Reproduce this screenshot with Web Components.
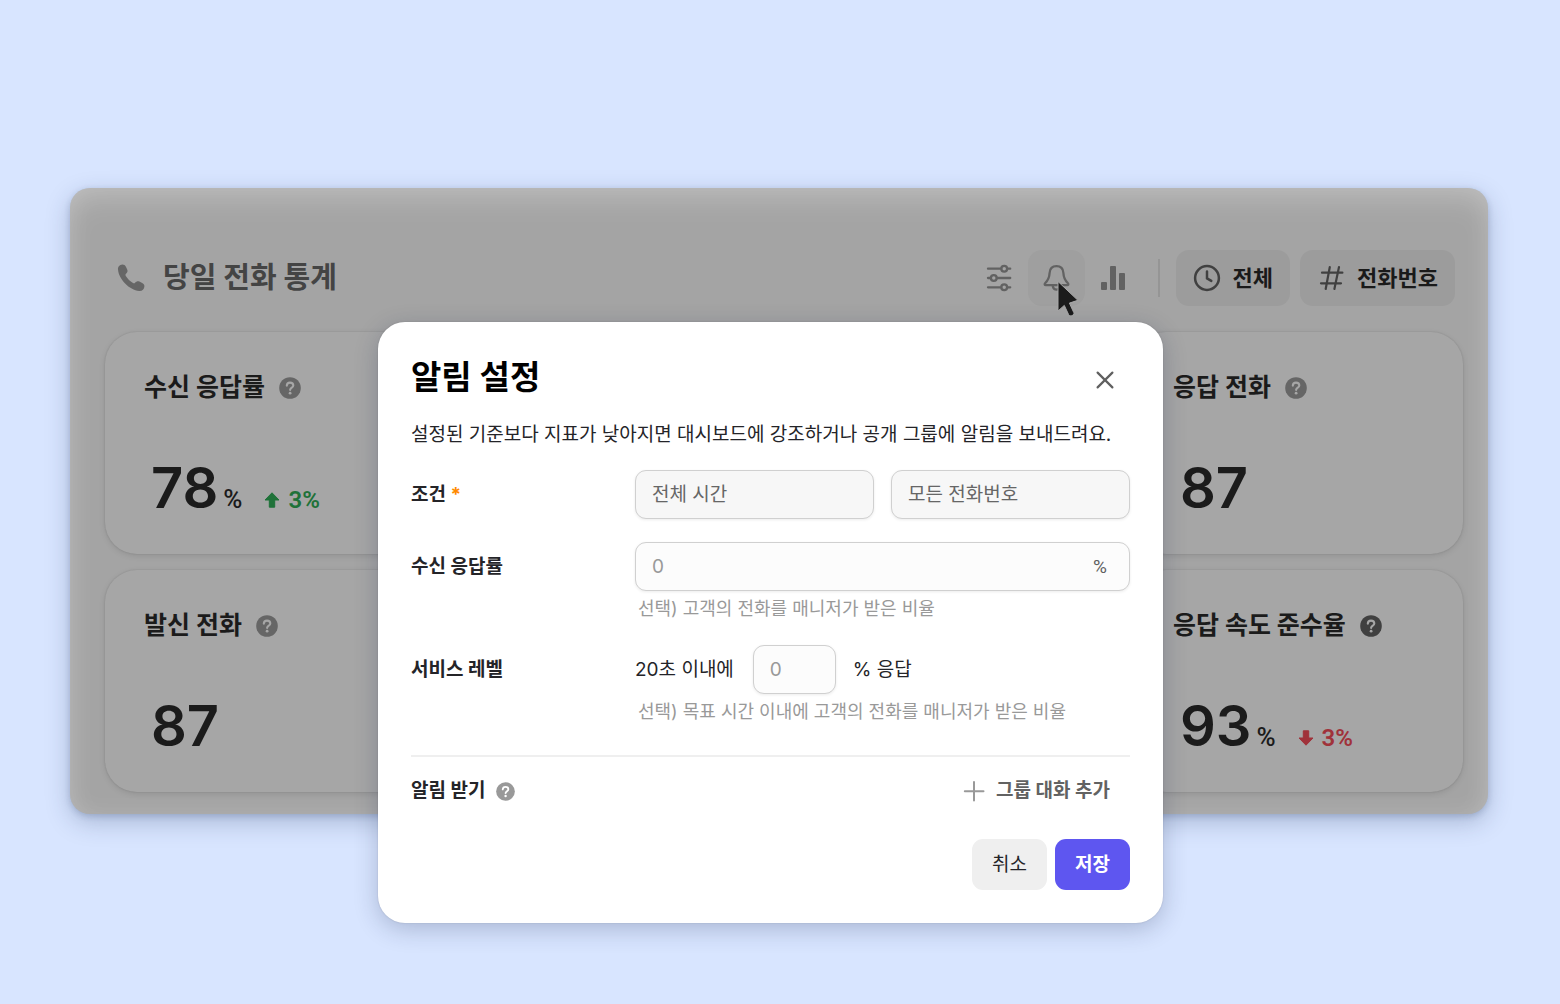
<!DOCTYPE html>
<html lang="ko">
<head>
<meta charset="utf-8">
<meta name="viewport" content="width=device-width, initial-scale=1">
<title>알림 설정</title>
<style>
  body {
    margin: 0;
    min-height: 100vh;
    background: #d8e5ff;
    color: #242428;
    font-family: Inter, "Noto Sans CJK KR", sans-serif;
    font-size: 19px;
    line-height: 28px;
  }
</style>
</head>
<body>
<call-dashboard></call-dashboard>
<script>
const define = (name, html) => {
  const template = document.createElement('template');
  template.innerHTML = html;
  customElements.define(name, class extends HTMLElement {
    constructor() {
      super();
      this.attachShadow({ mode: 'open' }).append(template.content.cloneNode(true));
    }
  });
};

const ICONS = {
  phone: [28, 28, '<path fill="currentColor" d="M1 5.600C.8 2.900 2.600.7 5.400.6c1.700 0 2.700.7 3.500 2.200l1.300 2.700c.7 1.600.3 3-1.200 4.300-.7.7-.7 1.300-.2 2.100 1.900 3 4.100 5.200 7.200 7.100.8.5 1.500.5 2.100-.2 1.400-1.600 2.700-1.900 4.300-1.200l2.800 1.400c1.600.8 2.300 1.800 2.200 3.500-.1 2.800-2.300 4.700-5.200 4.500C12.500 26.300 1.700 15.300 1 5.600z"/>'],
  sliders: [28, 28, '<g fill="none" stroke="currentColor" stroke-width="2.3" stroke-linecap="round"><path d="M3 4.700h13.200M22.200 4.700h3M3 14h2.700M11.800 14h13.400M3 23.300h13.200M22.200 23.300h3"/><circle cx="19.200" cy="4.700" r="2.900"/><circle cx="8.800" cy="14" r="2.900"/><circle cx="19.200" cy="23.300" r="2.900"/></g>'],
  bell: [28, 28, '<g fill="none" stroke="currentColor" stroke-width="2.300" stroke-linejoin="round" stroke-linecap="round"><path d="M14.500 2.200c-4.200 0-6.700 2.800-6.900 6.800-.2 4.600-1.200 7-4.500 10.300-.8.900-.5 1.800.7 1.800h21.400c1.200 0 1.500-.9.700-1.800-3.300-3.300-4.300-5.700-4.500-10.300-.2-4-2.700-6.800-6.900-6.800z"/><path d="M10.800 22.200c.5 2.200 1.900 3.500 3.700 3.500s3.200-1.300 3.700-3.500"/></g>'],
  bars: [28, 28, '<g fill="currentColor"><rect x="2" y="18" width="6" height="8" rx="1"/><rect x="11" y="2" width="6" height="24" rx="1"/><rect x="20" y="9" width="6" height="17" rx="1"/></g>'],
  clock: [28, 28, '<g fill="none" stroke="currentColor" stroke-width="2.500" stroke-linecap="round" stroke-linejoin="round"><circle cx="14" cy="14" r="11.900"/><path d="M14 7.400v7l4.300 2.500"/></g>'],
  hash: [28, 28, '<path fill="none" stroke="currentColor" stroke-width="2.200" stroke-linecap="round" d="M12.800 3 8.700 25M22 3l-4.600 22M5 8.700h20.400M4 19.300H24"/>'],
  help: [22, 22, '<circle cx="11" cy="11" r="10.800" fill="currentColor"/><path d="M7.800 8.600C7.900 6.700 9.200 5.600 11 5.600c1.900 0 3.300 1.100 3.300 2.800 0 2.200-3 2.300-3.200 4.500" fill="none" stroke="var(--mark, #a6a6a6)" stroke-width="2.100" stroke-linecap="round"/><circle cx="11.100" cy="16.200" r="1.400" fill="var(--mark, #a6a6a6)"/>'],
  up: [16, 16, '<path fill="currentColor" stroke="currentColor" stroke-width="1" stroke-linejoin="round" d="M8 .8l7 7.200h-4.300v7.200H5.300V8H1z"/>'],
  down: [16, 16, '<path fill="currentColor" stroke="currentColor" stroke-width="1" stroke-linejoin="round" d="M8 15.200l7-7.200h-4.300V.8H5.300V8H1z"/>'],
  close: [18, 18, '<path fill="none" stroke="currentColor" stroke-width="2.200" stroke-linecap="round" d="M1.600 1.600l14.800 14.800M16.400 1.600 1.600 16.400"/>'],
  plus: [20, 20, '<path fill="none" stroke="currentColor" stroke-width="2" stroke-linecap="round" d="M10 1v18.500M.8 10.300h18.700"/>'],
  cursor: [22, 36, '<path fill="#1b1b1b" stroke="#a9a9a9" stroke-width="1" d="M1 .5v29.500l6.300-5.600 4.300 9.200c1.200 2.500 6.400.8 5.200-2l-4.400-9.500 8.500-2.800z"/>']
};

customElements.define('ui-icon', class extends HTMLElement {
  connectedCallback() {
    if (this.shadowRoot) return;
    const [w, h, art] = ICONS[this.getAttribute('name')];
    const size = Number(this.getAttribute('size')) || w;
    this.attachShadow({ mode: 'open' }).innerHTML = `
      <style>:host { display: inline-flex; flex: none; } svg { display: block; overflow: visible; }</style>
      <svg width="${size}" height="${size * h / w}" viewBox="0 0 ${w} ${h}" aria-hidden="true">${art}</svg>`;
  }
});

define('tool-button', `
  <style>
    :host { display: block; position: relative; color: #626262; }
    button { display: flex; align-items: center; justify-content: center; width: 57px; height: 56px; padding: 0; border: 0; border-radius: 14px; background: none; color: inherit; }
    :host([active]) button { background: #9f9f9f; }
    ::slotted([slot=pointer]) { position: absolute; left: 29px; top: 31px; z-index: 1; }
  </style>
  <button type="button"><slot></slot></button>
  <slot name="pointer"></slot>`);

define('filter-button', `
  <style>
    :host { display: block; }
    button { display: flex; align-items: center; gap: 12px; height: 56px; padding: 0 17px; border: 0; border-radius: 13px; background: #9c9c9c; color: #1a1a1a; font: 700 22px/32px Inter, "Noto Sans CJK KR", sans-serif; white-space: nowrap; }
    ::slotted(ui-icon) { color: #404040; }
  </style>
  <button type="button"><slot name="icon"></slot><span><slot></slot></span></button>`);

define('stat-card', `
  <style>
    :host { display: flex; flex-direction: column; justify-content: space-between; height: 222px; padding: 36px 39px; box-sizing: border-box; border-radius: 32px; background: #a6a6a6; color: #1b1b1b; box-shadow: 0 0 2px rgba(0,0,0,.14), 0 2px 6px rgba(0,0,0,.1); }
    header { display: flex; align-items: center; gap: 14px; }
    h3 { margin: 0; font-size: 25px; line-height: 38px; font-weight: 700; white-space: nowrap; }
    header ui-icon { color: var(--help, #666); margin-top: 2px; }
    div { display: flex; align-items: baseline; padding-left: 7px; line-height: 24px; }
    .value { font-size: 56px; line-height: 60px; font-weight: 600; }
    ::slotted([slot=unit]) { margin-left: 5px; font: 500 26px/24px Roboto, sans-serif; }
    ::slotted([slot=trend]) { margin-left: 22px; }
  </style>
  <header><h3><slot name="title"></slot></h3><ui-icon name="help"></ui-icon></header>
  <div><span class="value"><slot></slot></span><slot name="unit"></slot><slot name="trend"></slot></div>`);

define('trend-badge', `
  <style>
    :host { display: inline-flex; align-items: baseline; gap: 8px; font: 600 24px/24px Roboto, sans-serif; color: #1f7239; }
    :host([down]) { color: #a0323a; }
  </style>
  <slot></slot>`);

define('stats-panel', `
  <style>
    :host { display: block; padding: 62px 25px 22px 35px; border-radius: 20px; background: #a4a4a4;
      box-shadow: inset 0 14px 30px -4px rgba(255,255,255,.22), inset 0 0 24px rgba(255,255,255,.12), 0 2px 6px rgba(30,50,90,.18), 0 8px 24px rgba(30,50,90,.26); }
    .bar { display: flex; align-items: center; justify-content: space-between; padding: 0 8px 0 12px; margin-bottom: 26px; }
    .title { display: flex; align-items: center; gap: 18px; color: #666; }
    h1 { margin: 0; font-size: 29px; line-height: 42px; font-weight: 700; color: #444; white-space: nowrap; }
    nav { display: flex; align-items: center; }
    hr { width: 2px; height: 38px; margin: 0 16px; border: 0; background: #959595; }
    filter-button + filter-button { margin-left: 10px; }
    .grid { display: grid; grid-template-columns: repeat(4, 1fr); gap: 16px 14px; }
    .last { grid-column: 4; }
    .dark { --help: #404040; }
  </style>
  <div class="bar">
    <div class="title"><ui-icon name="phone"></ui-icon><h1>당일 전화 통계</h1></div>
    <nav>
      <tool-button><ui-icon name="sliders"></ui-icon></tool-button>
      <tool-button active><ui-icon name="bell"></ui-icon><ui-icon slot="pointer" name="cursor"></ui-icon></tool-button>
      <tool-button><ui-icon name="bars"></ui-icon></tool-button>
      <hr>
      <filter-button><ui-icon slot="icon" name="clock"></ui-icon>전체</filter-button>
      <filter-button><ui-icon slot="icon" name="hash"></ui-icon>전화번호</filter-button>
    </nav>
  </div>
  <div class="grid">
    <stat-card><span slot="title">수신 응답률</span>78<span slot="unit">%</span><trend-badge slot="trend"><ui-icon name="up"></ui-icon>3%</trend-badge></stat-card>
    <stat-card class="last"><span slot="title">응답 전화</span>87</stat-card>
    <stat-card><span slot="title">발신 전화</span>87</stat-card>
    <stat-card class="last dark"><span slot="title">응답 속도 준수율</span>93<span slot="unit">%</span><trend-badge slot="trend" down><ui-icon name="down"></ui-icon>3%</trend-badge></stat-card>
  </div>`);

define('form-row', `
  <style>
    :host { display: grid; grid-template-columns: 224px 1fr; }
    .label { display: flex; align-items: center; height: 49px; font-weight: 700; }
    .field { display: flex; align-items: center; gap: 17px; height: 49px; }
  </style>
  <div class="label"><slot name="label"></slot></div>
  <div>
    <div class="field"><slot></slot></div>
    <slot name="hint"></slot>
  </div>`);

define('alert-dialog', `
  <style>
    :host { display: block; box-sizing: border-box; width: 785px; padding: 33px; border-radius: 27px; background: #fff;
      box-shadow: 0 0 2px rgba(0,0,0,.14), 0 6px 24px rgba(20,35,70,.24); }
    header { display: flex; align-items: center; justify-content: space-between; height: 44px; }
    h2 { margin: 0; font-size: 33px; line-height: 44px; font-weight: 700; color: #000; }
    button { font: inherit; border: 0; padding: 0; background: none; color: inherit; cursor: pointer; }
    .close { display: flex; align-items: center; justify-content: center; align-self: flex-start; flex: none; width: 50px; height: 50px; color: #606060; }
    .intro { margin: 22px 0 21px; white-space: nowrap; }
    .hint { margin: 5px 3px 0; font-size: 18px; line-height: 26px; color: #999; }
    form-row { margin-bottom: 23px; }
    .required { color: #ff8a00; }
    input, select { appearance: none; box-sizing: border-box; min-width: 0; height: 49px; padding: 0 16px; border: 1px solid #d0d0d0; border-radius: 11px; background: #fcfcfc; box-shadow: 0 1px 3px rgba(0,0,0,.08); font: inherit; color: #242428; outline: 0; }
    input::placeholder { color: #999; opacity: 1; }
    select { flex: 1; background: #f7f7f7; color: #666; opacity: 1; }
    .rate { display: grid; flex: 1; align-items: center; }
    .rate > * { grid-area: 1 / 1; }
    .rate span { justify-self: end; margin-right: 23px; font-family: Roboto, sans-serif; color: #606060; }
    .small { width: 83px; margin: 0 0 0 2px; }
    hr { margin: 30px 0 14px; border: 0; border-top: 2px solid #efefef; }
    .receive { display: flex; align-items: center; justify-content: space-between; height: 40px; font-weight: 700; }
    .receive > span { display: flex; align-items: center; gap: 11px; }
    .receive ui-icon { color: #999; --mark: #fff; }
    .add { display: flex; align-items: center; gap: 12px; padding-right: 20px; color: #626262; }
    footer { display: flex; justify-content: flex-end; gap: 8px; margin-top: 28px; }
    footer button { width: 75px; height: 51px; border-radius: 11px; background: #efefef; }
    footer .save { background: #5e56f0; color: #fff; font-weight: 700; }
  </style>
  <header><h2 id="title">알림 설정</h2><button class="close" type="button" aria-label="닫기"><ui-icon name="close"></ui-icon></button></header>
  <p class="intro">설정된 기준보다 지표가 낮아지면 대시보드에 강조하거나 공개 그룹에 알림을 보내드려요.</p>
  <form-row>
    <label slot="label" for="time" id="condition">조건 <span class="required">*</span></label>
    <select id="time" disabled><option>전체 시간</option></select>
    <select aria-labelledby="condition" disabled><option>모든 전화번호</option></select>
  </form-row>
  <form-row>
    <label slot="label" for="rate">수신 응답률</label>
    <div class="rate"><input id="rate" type="text" inputmode="numeric" placeholder="0"><span>%</span></div>
    <p class="hint" slot="hint">선택) 고객의 전화를 매니저가 받은 비율</p>
  </form-row>
  <form-row>
    <label slot="label" for="level">서비스 레벨</label>
    <span>20초 이내에</span><input class="small" id="level" type="text" inputmode="numeric" placeholder="0"><span>% 응답</span>
    <p class="hint" slot="hint">선택) 목표 시간 이내에 고객의 전화를 매니저가 받은 비율</p>
  </form-row>
  <hr>
  <div class="receive">
    <span>알림 받기 <ui-icon name="help" size="19"></ui-icon></span>
    <button class="add" type="button"><ui-icon name="plus"></ui-icon>그룹 대화 추가</button>
  </div>
  <footer><button type="button">취소</button><button class="save" type="button">저장</button></footer>`);

define('call-dashboard', `
  <style>
    :host { display: grid; padding: 188px 72px 80px 70px; }
    stats-panel, alert-dialog { grid-area: 1 / 1; align-self: start; }
    alert-dialog { justify-self: center; margin: 134px 17px 0 0; z-index: 1; }
  </style>
  <stats-panel></stats-panel>
  <alert-dialog role="dialog"></alert-dialog>`);
</script>
</body>
</html>
